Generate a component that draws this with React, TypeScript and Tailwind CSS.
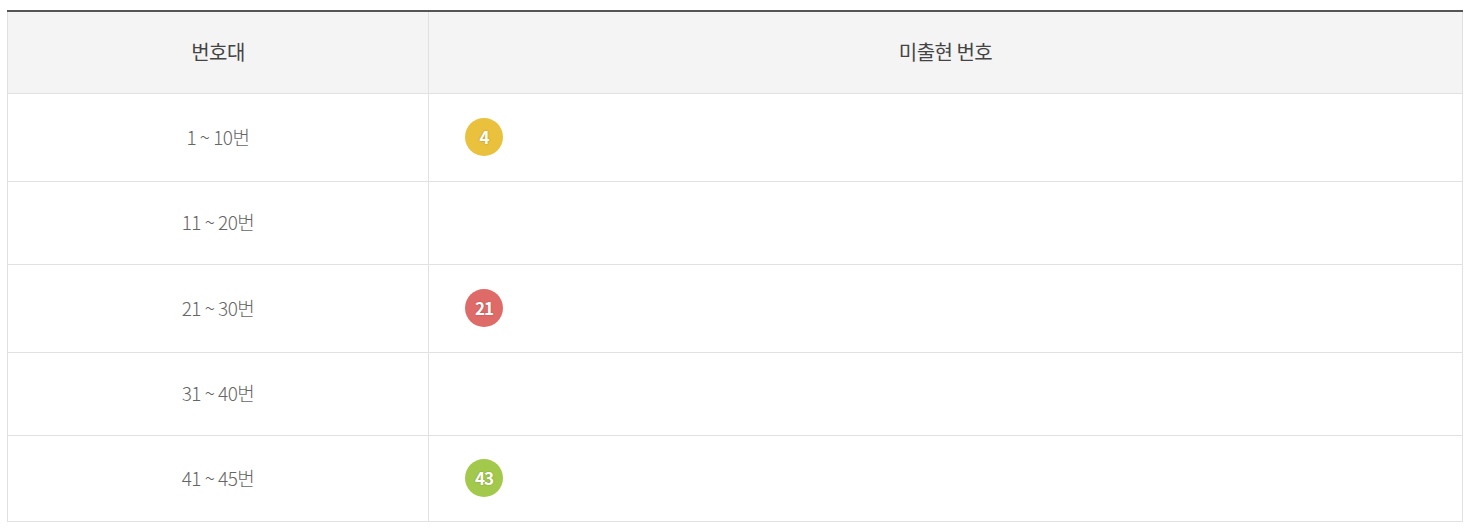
import React from "react";

type Row = { range: string; balls: number[]; h: string };

const rows: Row[] = [
  { range: "1 ~ 10번", balls: [4], h: "h-[88px]" },
  { range: "11 ~ 20번", balls: [], h: "h-[83px]" },
  { range: "21 ~ 30번", balls: [21], h: "h-[88px]" },
  { range: "31 ~ 40번", balls: [], h: "h-[83px]" },
  { range: "41 ~ 45번", balls: [43], h: "h-[86px]" },
];

function ballColor(n: number) {
  if (n <= 10) return "bg-[#e9c13c]";
  if (n <= 20) return "bg-[#6b9fd4]";
  if (n <= 30) return "bg-[#df6b68]";
  if (n <= 40) return "bg-[#a8a8a8]";
  return "bg-[#a3c94c]";
}

function Ball({ n }: { n: number }) {
  return (
    <span
      className={`inline-flex h-[38px] w-[38px] items-center justify-center rounded-full text-[17px] font-bold tracking-[-1px] text-white ${ballColor(n)}`}
      style={{ textShadow: "0 0 2px rgba(0,0,0,0.25)" }}
    >
      {n}
    </span>
  );
}

export default function App() {
  return (
    <div
      className="bg-white pl-[7px] pr-[7px] pt-[10px]"
      style={{ fontFamily: '"Noto Sans CJK KR", "Noto Sans", sans-serif' }}
    >
      <table className="w-[1456px] table-fixed border-collapse border-t-2 border-t-[#555]">
        <colgroup>
          <col className="w-[421px]" />
          <col />
        </colgroup>
        <thead>
          <tr className="h-[82px] bg-[#f4f4f4]">
            <th className="border border-t-0 border-[#e1e1e1] text-center text-[20px] font-normal tracking-[-0.5px] text-[#444]">
              번호대
            </th>
            <th className="border border-t-0 border-[#e1e1e1] text-center text-[20px] font-normal tracking-[-0.5px] text-[#444]">
              미출현 번호
            </th>
          </tr>
        </thead>
        <tbody>
          {rows.map((r) => (
            <tr key={r.range} className={r.h}>
              <td className="border border-[#e1e1e1] text-center text-[19px] font-light tracking-[-0.5px] text-[#666]">
                {r.range}
              </td>
              <td className="border border-[#e1e1e1] pl-[36px]">
                <div className="flex items-center gap-2">
                  {r.balls.map((b) => (
                    <Ball key={b} n={b} />
                  ))}
                </div>
              </td>
            </tr>
          ))}
        </tbody>
      </table>
    </div>
  );
}
